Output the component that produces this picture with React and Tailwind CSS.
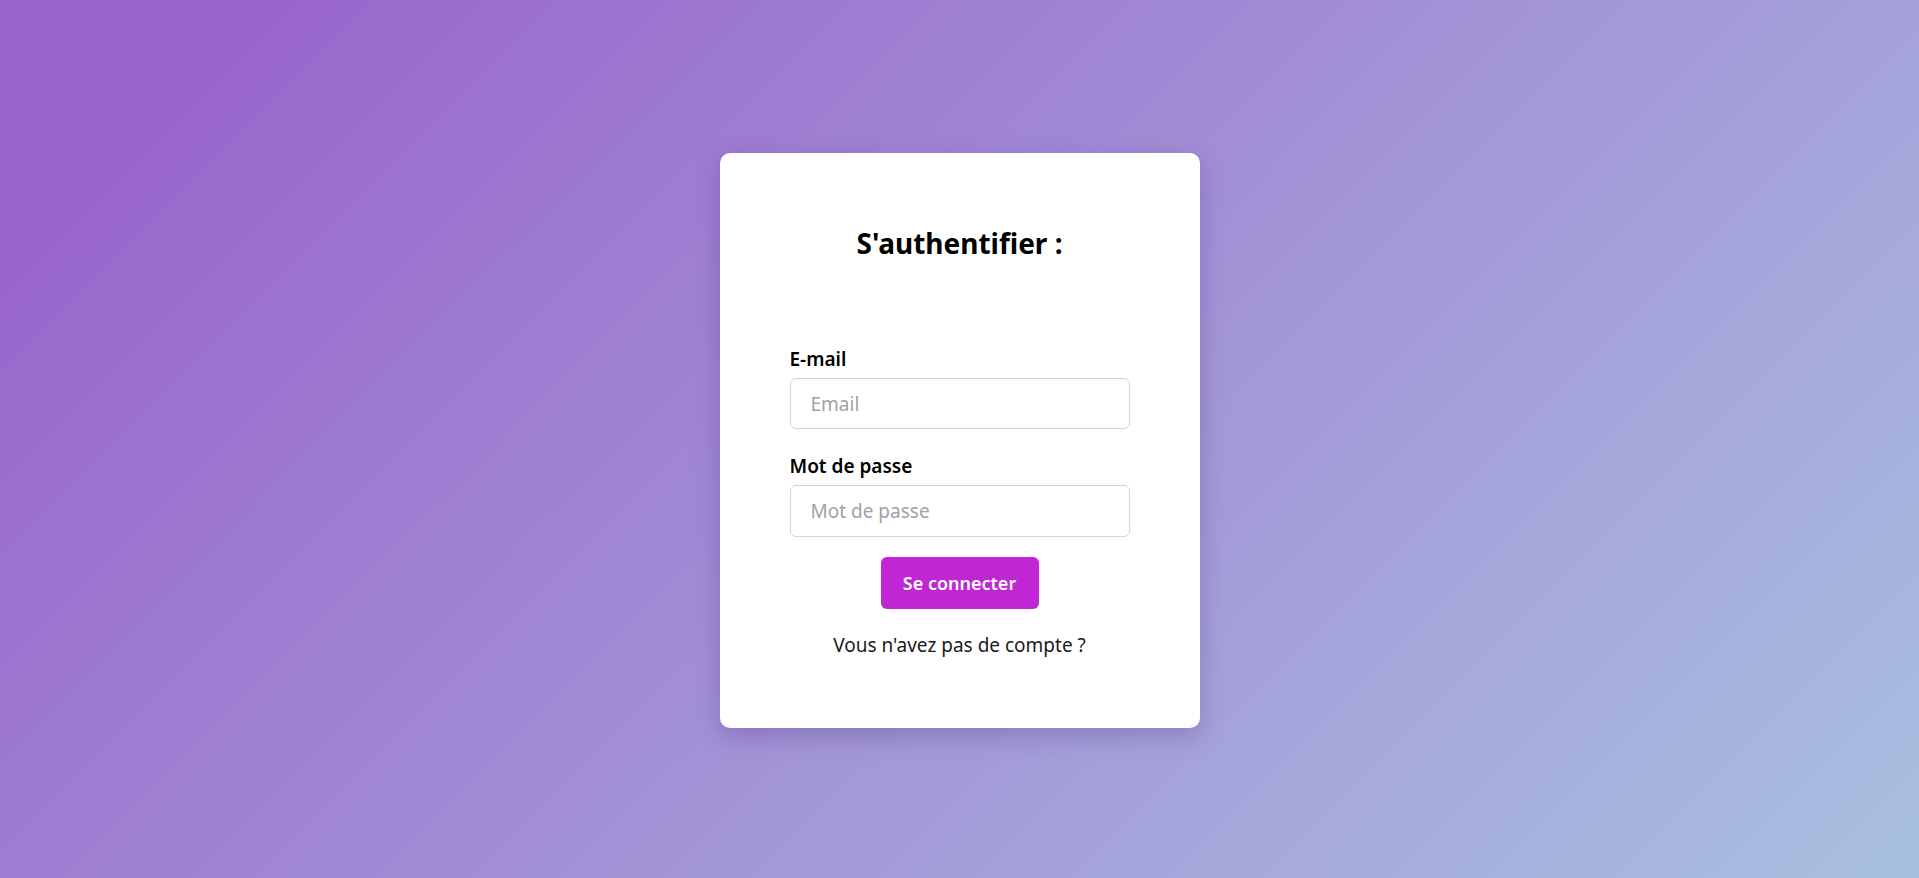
export default function App() {
  return (
    <div
      className="min-h-screen w-full flex justify-center items-start pt-[153px] bg-linear-135 from-[#9966cc] from-10% to-[#a8c0e0]"
      style={{ fontFamily: '"Noto Sans", "Open Sans", sans-serif' }}
    >
      <div className="w-[480px] bg-white rounded-[10px] shadow-[0_8px_24px_rgba(60,30,110,0.25)] pt-[74px] pb-[71px] flex flex-col items-center">
        <h1 className="text-[28px] leading-[32px] font-bold text-black">S'authentifier :</h1>
        <form className="w-[340px] mt-[88px] flex flex-col" onSubmit={(e) => e.preventDefault()}>
          <label className="text-[19px] leading-[24px] font-semibold text-black">E-mail</label>
          <input
            type="email"
            placeholder="Email"
            className="mt-[7px] h-[51px] w-full rounded-[6px] border border-[#d4d4d8] px-[20px] text-[19px] text-black placeholder:text-[#a1a1aa] outline-none"
          />
          <label className="mt-[25px] text-[19px] leading-[24px] font-semibold text-black">Mot de passe</label>
          <input
            type="password"
            placeholder="Mot de passe"
            className="mt-[7px] h-[52px] w-full rounded-[6px] border border-[#d4d4d8] px-[20px] text-[19px] text-black placeholder:text-[#a1a1aa] outline-none"
          />
          <div className="mt-[20px] flex justify-center">
            <button
              type="submit"
              className="w-[158px] h-[52px] rounded-[6px] bg-[#c026d3] text-white text-[18px] font-semibold"
            >
              Se connecter
            </button>
          </div>
          <p className="mt-[24px] text-center text-[19px] leading-[24px] text-[#1a1a1a]">Vous n'avez pas de compte ?</p>
        </form>
      </div>
    </div>
  );
}
